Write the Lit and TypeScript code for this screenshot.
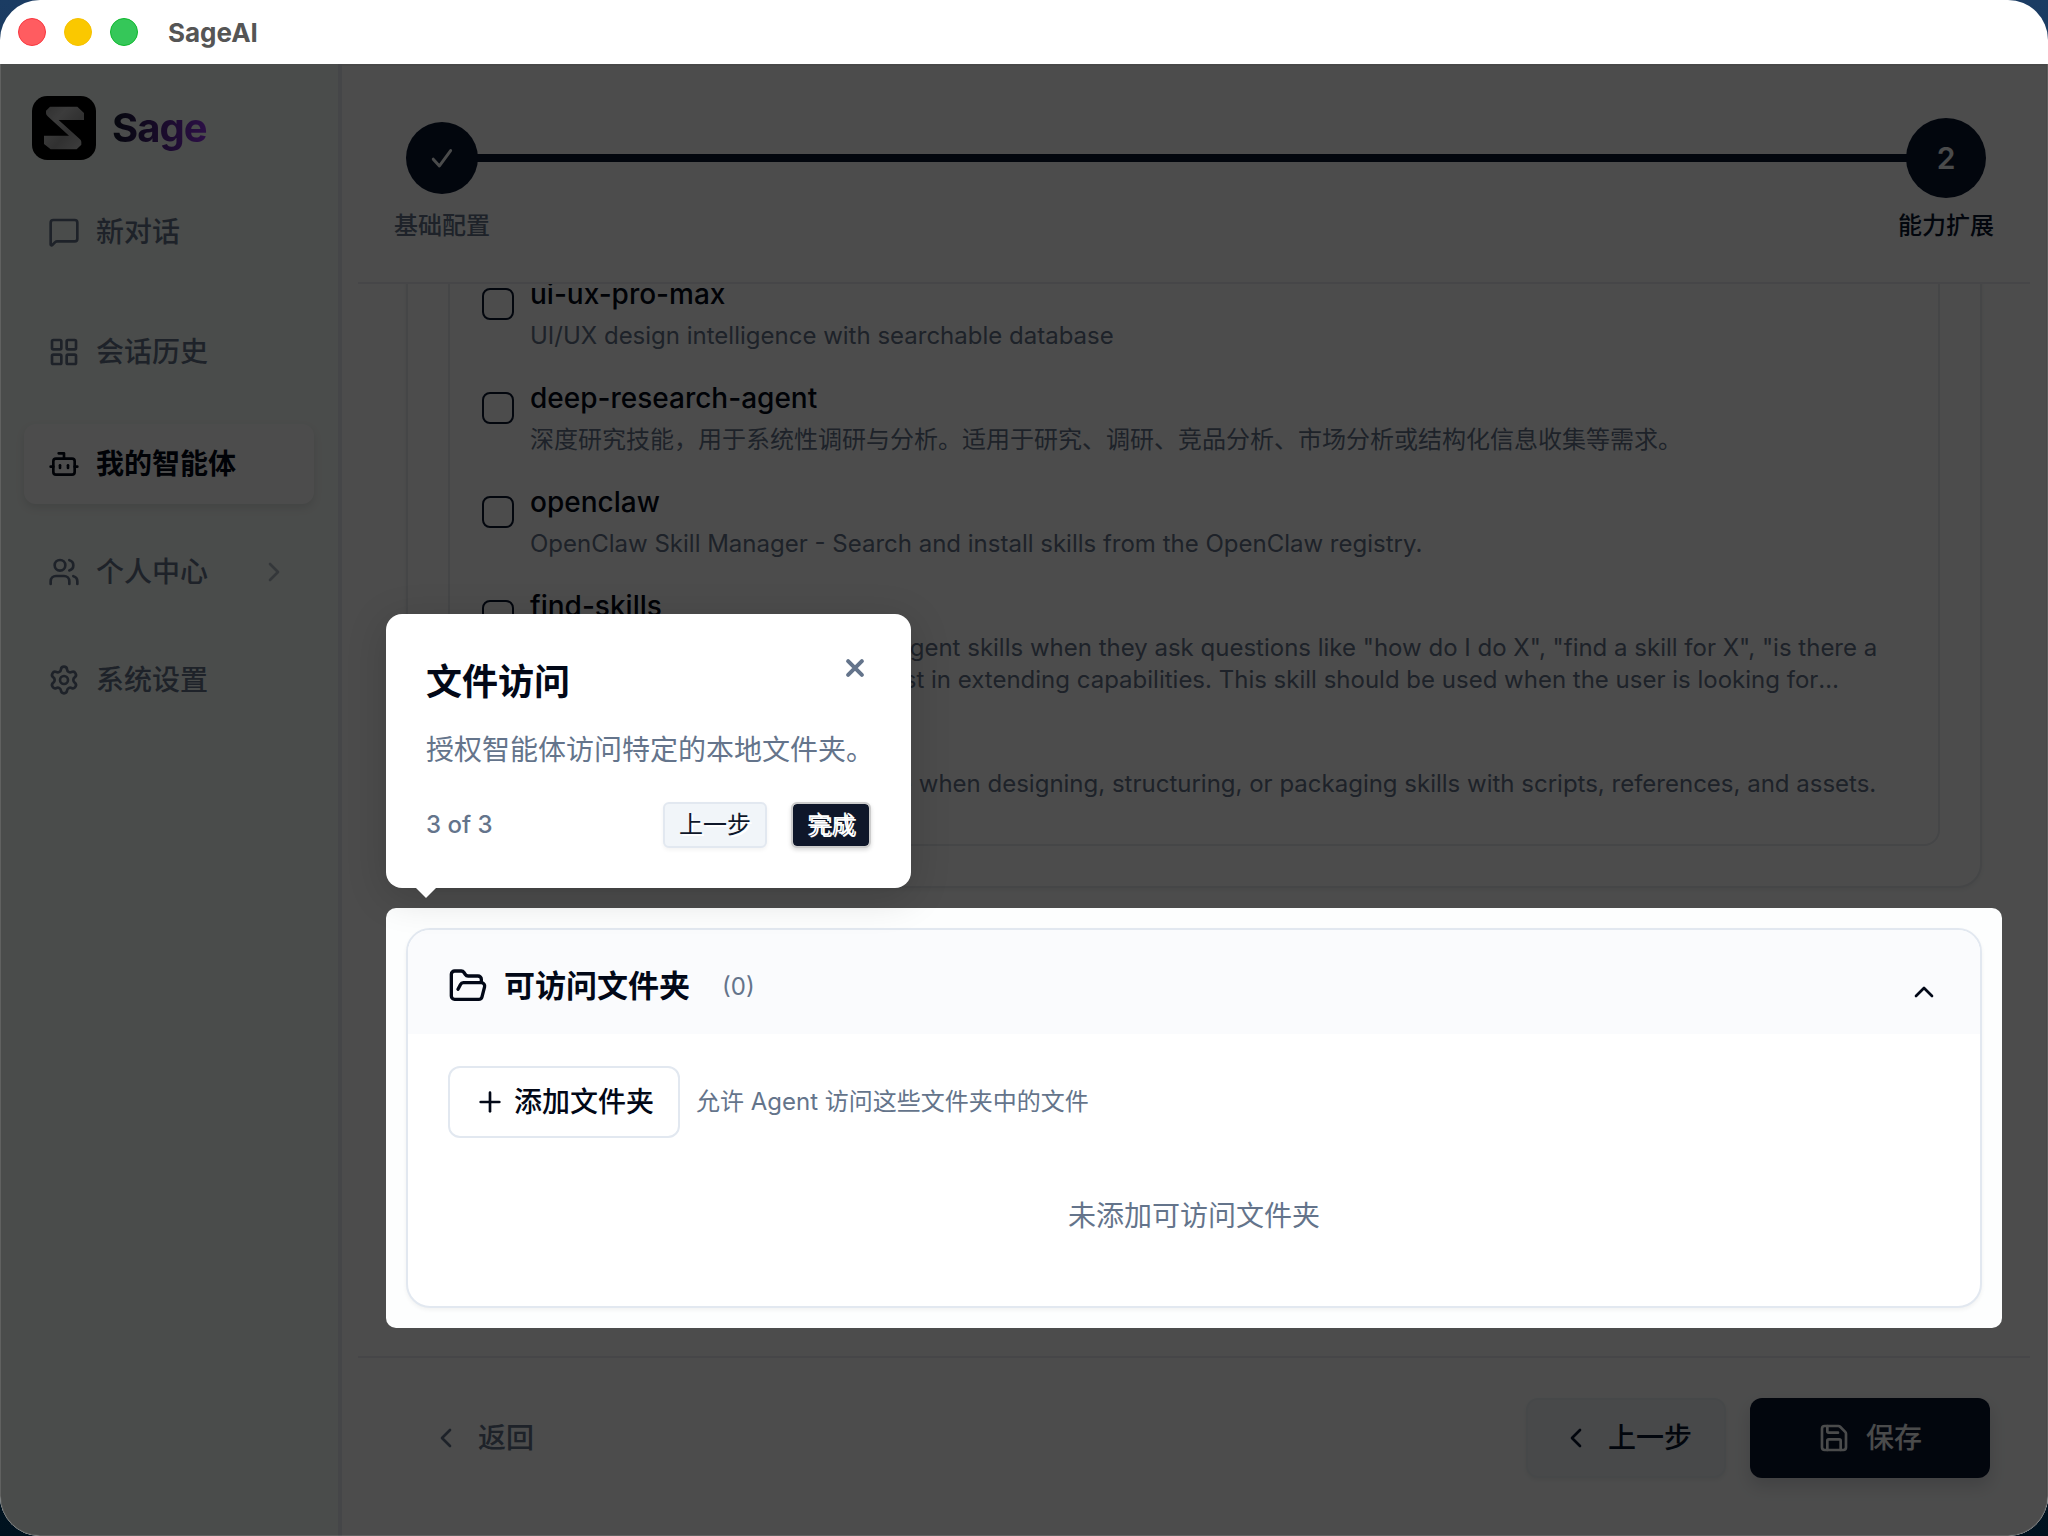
import { LitElement, html, css, svg } from "lit";
import { customElement, property } from "lit/decorators.js";

const ICONS: Record<string, unknown> = {
  message: svg`<path d="M22 17a2 2 0 0 1-2 2H6.828a2 2 0 0 0-1.414.586l-2.202 2.202A.71.71 0 0 1 2 21.286V5a2 2 0 0 1 2-2h16a2 2 0 0 1 2 2z"/>`,
  grid: svg`<rect width="7" height="7" x="3" y="3" rx="1"/><rect width="7" height="7" x="14" y="3" rx="1"/><rect width="7" height="7" x="14" y="14" rx="1"/><rect width="7" height="7" x="3" y="14" rx="1"/>`,
  bot: svg`<path d="M12 8V4H8"/><rect width="16" height="12" x="4" y="8" rx="2"/><path d="M2 14h2"/><path d="M20 14h2"/><path d="M15 13v2"/><path d="M9 13v2"/>`,
  users: svg`<path d="M16 21v-2a4 4 0 0 0-4-4H6a4 4 0 0 0-4 4v2"/><path d="M16 3.128a4 4 0 0 1 0 7.744"/><path d="M22 21v-2a4 4 0 0 0-3-3.87"/><circle cx="9" cy="7" r="4"/>`,
  settings: svg`<path d="M9.671 4.136a2.34 2.34 0 0 1 4.659 0 2.34 2.34 0 0 0 3.319 1.915 2.34 2.34 0 0 1 2.33 4.033 2.34 2.34 0 0 0 0 3.831 2.34 2.34 0 0 1-2.33 4.033 2.34 2.34 0 0 0-3.319 1.915 2.34 2.34 0 0 1-4.659 0 2.34 2.34 0 0 0-3.32-1.915 2.34 2.34 0 0 1-2.33-4.033 2.34 2.34 0 0 0 0-3.831A2.34 2.34 0 0 1 6.35 6.051a2.34 2.34 0 0 0 3.319-1.915"/><circle cx="12" cy="12" r="3"/>`,
  right: svg`<path d="m9 18 6-6-6-6"/>`,
  left: svg`<path d="m15 18-6-6 6-6"/>`,
  up: svg`<path d="m18 15-6-6-6 6"/>`,
  check: svg`<path stroke-width="2.5" d="M4.5 13 9.8 18.8 19.4 5.6"/>`,
  plus: svg`<path d="M5 12h14"/><path d="M12 5v14"/>`,
  folder: svg`<path d="m6 14 1.5-2.9A2 2 0 0 1 9.24 10H20a2 2 0 0 1 1.94 2.5l-1.54 6a2 2 0 0 1-1.95 1.5H4a2 2 0 0 1-2-2V5a2 2 0 0 1 2-2h3.9a2 2 0 0 1 1.69.9l.81 1.2a2 2 0 0 0 1.67.9H18a2 2 0 0 1 2 2v2"/>`,
  save: svg`<path d="M15.2 3a2 2 0 0 1 1.4.6l3.8 3.8a2 2 0 0 1 .6 1.4V19a2 2 0 0 1-2 2H5a2 2 0 0 1-2-2V5a2 2 0 0 1 2-2z"/><path d="M17 21v-7a1 1 0 0 0-1-1H8a1 1 0 0 0-1 1v7"/><path d="M7 3v4a1 1 0 0 0 1 1h7"/>`,
  close: svg`<path stroke-width="4.4" d="m4.5 4.5 15 15M19.500 4.500 4.500 19.500"/>`,
};

const icon = (name: string, size = 32) => html`<svg
  width=${size}
  height=${size}
  viewBox="0 0 24 24"
  fill="none"
  stroke="currentColor"
  stroke-width="2"
  stroke-linecap="round"
  stroke-linejoin="round"
  aria-hidden="true"
>${ICONS[name]}</svg>`;

const base = css`
  *, *::before, *::after { box-sizing: border-box; }
  button {
    font: inherit;
    color: inherit;
    border: 0;
    background: none;
    padding: 0;
    margin: 0;
    cursor: pointer;
  }
  svg { display: block; flex: none; }
  h1, h2, h3, p, ul { margin: 0; padding: 0; }
  ul { list-style: none; }
`;

@customElement("app-sidebar")
export class AppSidebar extends LitElement {
  static styles = [
    base,
    css`
      :host {
        display: block;
        flex: none;
        width: 342px;
        padding: 32px 24px;
        background: #f8fdfa;
        border-right: 4px solid #e6e9f2;
      }
      .brand {
        display: flex;
        align-items: center;
        gap: 16px;
        margin: 0 8px 32px;
      }
      .name {
        font-size: 40px;
        line-height: 64px;
        font-weight: 700;
        letter-spacing: -1px;
        color: transparent;
        background: linear-gradient(90deg, #0f172a, #9333ea);
        background-clip: text;
      }
      .nav { display: flex; flex-direction: column; gap: 28px; }
      .item {
        display: flex;
        align-items: center;
        gap: 16px;
        width: 100%;
        height: 80px;
        padding: 0 24px;
        border-radius: 12px;
        font-size: 28px;
        line-height: 40px;
        font-weight: 500;
        color: #64748b;
        text-align: left;
        text-decoration: none;
      }
      .primary { margin-bottom: 12px; }
      .history { margin-bottom: 4px; }
      .active {
        background: #fff;
        color: #020817;
        font-weight: 700;
        box-shadow: 0 4px 8px rgba(0, 0, 0, 0.1);
      }
      .label { flex: 1; }
      .more { opacity: 0.5; }
    `,
  ];

  render() {
    return html`
      <div class="brand">
        <svg width="64" height="64" viewBox="0 0 192 192" aria-hidden="true">
          <defs>
            <linearGradient id="steel" x1="0" y1="0" x2="1" y2="1">
              <stop offset="0" stop-color="#a0a0a0" />
              <stop offset="0.3" stop-color="#c8c8c8" />
              <stop offset="0.6" stop-color="#a4a4a4" />
              <stop offset="1" stop-color="#d0d0d0" />
            </linearGradient>
          </defs>
          <rect width="192" height="192" rx="46" fill="#000" />
          <path
            fill="url(#steel)"
            d="M54 32h82l20 19v21H80l64 58q4 3 4 8v8l-14 14H56l-20-16v-25h75L47 61q-5-4-5-9v-8z"
          />
        </svg>
        <span class="name">Sage</span>
      </div>
      <nav class="nav">
        <a class="item primary" href="#chat">${icon("message")}<span class="label">新对话</span></a>
        <a class="item history" href="#history">${icon("grid")}<span class="label">会话历史</span></a>
        <a class="item active" href="#agents" aria-current="page">${icon("bot")}<span class="label">我的智能体</span></a>
        <button class="item" type="button">
          ${icon("users")}<span class="label">个人中心</span><span class="more">${icon("right")}</span>
        </button>
        <a class="item" href="#settings">${icon("settings")}<span class="label">系统设置</span></a>
      </nav>
    `;
  }
}

@customElement("app-stepper")
export class AppStepper extends LitElement {
  static styles = [
    base,
    css`
      :host {
        display: flex;
        align-items: flex-start;
        padding: 56px 36px 40px;
        border-bottom: 2px solid #e9ebf0;
      }
      .step {
        display: flex;
        flex-direction: column;
        align-items: center;
        gap: 16px;
        font-size: 24px;
        line-height: 32px;
        font-weight: 500;
        color: #64748b;
      }
      .dot {
        position: relative;
        z-index: 1;
        display: grid;
        place-items: center;
        width: 72px;
        height: 72px;
        border-radius: 50%;
        background: #08142e;
        color: #f8fafc;
      }
      .current { color: #08142e; }
      .current .dot {
        width: 80px;
        height: 80px;
        margin: -4px 0;
        font-size: 30px;
        font-weight: 600;
      }
      .line {
        flex: 1;
        height: 8px;
        margin: 32px -40px 0;
        background: #08142e;
      }
    `,
  ];

  render() {
    return html`
      <div class="step"><span class="dot">${icon("check", 28)}</span>基础配置</div>
      <div class="line"></div>
      <div class="step current"><span class="dot">2</span>能力扩展</div>
    `;
  }
}

interface Skill {
  name: string;
  desc: string;
}

const SKILLS: Skill[] = [
  { name: "ui-ux-pro-max", desc: "UI/UX design intelligence with searchable database" },
  { name: "deep-research-agent", desc: "深度研究技能，用于系统性调研与分析。适用于研究、调研、竞品分析、市场分析或结构化信息收集等需求。" },
  { name: "openclaw", desc: "OpenClaw Skill Manager - Search and install skills from the OpenClaw registry." },
  {
    name: "find-skills",
    desc: 'Helps users discover and install agent skills when they ask questions like "how do I do X", "find a skill for X", "is there a skill that can...", or express interest in extending capabilities. This skill should be used when the user is looking for functionality that might exist as an installable skill.',
  },
  {
    name: "skill-creator",
    desc: "Create or update AgentSkills. Use when designing, structuring, or packaging skills with scripts, references, and assets.",
  },
];

@customElement("skill-list")
export class SkillList extends LitElement {
  @property({ attribute: false }) skills: Skill[] = [];

  static styles = [
    base,
    css`
      :host {
        display: flex;
        flex-direction: column;
        justify-content: flex-end;
        flex: 1;
        min-height: 0;
        overflow: hidden;
        padding: 0 48px 8px;
      }
      .card {
        flex: none;
        padding: 40px;
        border: 2px solid #e6e9ee;
        border-radius: 24px;
        background: #fff;
        box-shadow: 0 2px 4px rgba(0, 0, 0, 0.05);
      }
      .list {
        display: flex;
        flex-direction: column;
        gap: 28px;
        padding: 32px 32px 44px;
        border: 2px solid #e6e9ee;
        border-radius: 16px;
      }
      .row { display: flex; align-items: flex-start; gap: 16px; }
      .box {
        appearance: none;
        flex: none;
        width: 32px;
        height: 32px;
        margin: 12px 0 0;
        border: 2px solid #08142e;
        border-radius: 8px;
      }
      .text { flex: 1; min-width: 0; display: flex; flex-direction: column; gap: 8px; }
      .name { font-size: 28px; line-height: 36px; font-weight: 500; color: #020817; }
      .desc {
        font-size: 24px;
        line-height: 32px;
        color: #64748b;
        display: -webkit-box;
        -webkit-box-orient: vertical;
        -webkit-line-clamp: 2;
        overflow: hidden;
      }
    `,
  ];

  render() {
    return html`<div class="card">
      <ul class="list">
        ${this.skills.map(
          (s, i) => html`<li class="row">
            <input class="box" type="checkbox" id="skill-${i}" />
            <div class="text">
              <label class="name" for="skill-${i}">${s.name}</label>
              <p class="desc">${s.desc}</p>
            </div>
          </li>`
        )}
      </ul>
    </div>`;
  }
}

@customElement("tour-popover")
export class TourPopover extends LitElement {
  static styles = [
    base,
    css`
      :host {
        position: absolute;
        left: 0;
        bottom: calc(100% + 20px);
        width: 525px;
        padding: 40px;
        border-radius: 16px;
        background: #fff;
        color: #020817;
        box-shadow: 0 8px 40px rgba(0, 0, 0, 0.16);
      }
      .arrow {
        position: absolute;
        left: 30px;
        top: 100%;
        border: 10px solid transparent;
        border-top-color: #fff;
        border-bottom-width: 0;
      }
      .head { display: flex; justify-content: space-between; align-items: flex-start; }
      .title { font-size: 36px; line-height: 56px; font-weight: 600; }
      .close { padding: 3px; margin-right: 2px; color: #64748b; }
      .desc {
        margin-top: 18px;
        font-size: 28px;
        line-height: 44px;
        color: #64748b;
        white-space: nowrap;
      }
      .foot { display: flex; align-items: center; gap: 24px; margin-top: 30px; }
      .progress { flex: 1; font-size: 24px; line-height: 40px; font-weight: 500; color: #64748b; }
      .btn {
        height: 46px;
        padding: 0 14px;
        border: 2px solid #e2e8f0;
        border-radius: 6px;
        background: #f1f5f9;
        color: #0f172a;
        font-size: 24px;
        line-height: 40px;
        text-shadow: 2px 2px 0 #fff;
        box-shadow: 0 2px 4px rgba(0, 0, 0, 0.05);
      }
      .done {
        border-color: #ccc;
        background: #0f172a;
        background-clip: padding-box;
        color: #fff;
        box-shadow: 0 2px 4px rgba(0, 0, 0, 0.15);
      }
    `,
  ];

  render() {
    return html`
      <div class="head">
        <h2 class="title">文件访问</h2>
        <button class="close" type="button" aria-label="关闭">${icon("close", 22)}</button>
      </div>
      <p class="desc">授权智能体访问特定的本地文件夹。</p>
      <div class="foot">
        <span class="progress">3 of 3</span>
        <button class="btn" type="button">上一步</button>
        <button class="btn done" type="button">完成</button>
      </div>
      <span class="arrow"></span>
    `;
  }
}

@customElement("folder-card")
export class FolderCard extends LitElement {
  static styles = [
    base,
    css`
      :host {
        display: block;
        border: 2px solid #e2e8f0;
        border-radius: 24px;
        background: #fff;
        overflow: hidden;
        color: #020817;
        box-shadow: 0 2px 4px rgba(0, 0, 0, 0.05);
      }
      .head {
        display: flex;
        align-items: center;
        height: 104px;
        padding: 8px 40px 0;
        background: #fafbfd;
      }
      .title { margin-left: 16px; font-size: 31px; line-height: 48px; font-weight: 600; }
      .count { margin-left: 32px; font-size: 24px; color: #64748b; }
      .toggle { margin-left: auto; margin-top: 12px; }
      .body { padding: 32px 40px 40px; }
      .actions { display: flex; align-items: center; gap: 16px; }
      .add {
        display: flex;
        align-items: center;
        gap: 8px;
        height: 72px;
        padding: 0 24px;
        border: 2px solid #e2e8f0;
        border-radius: 12px;
        background: #fff;
        font-size: 28px;
        line-height: 40px;
        font-weight: 500;
      }
      .hint { font-size: 24px; line-height: 32px; color: #64748b; }
      .empty {
        margin-top: 24px;
        padding: 34px 0 30px;
        text-align: center;
        font-size: 28px;
        line-height: 40px;
        color: #64748b;
      }
    `,
  ];

  render() {
    return html`
      <div class="head">
        ${icon("folder", 40)}
        <h3 class="title">可访问文件夹</h3>
        <span class="count">(0)</span>
        <button class="toggle" type="button" aria-label="收起">${icon("up")}</button>
      </div>
      <div class="body">
        <div class="actions">
          <button class="add" type="button">${icon("plus")}添加文件夹</button>
          <span class="hint">允许 Agent 访问这些文件夹中的文件</span>
        </div>
        <p class="empty">未添加可访问文件夹</p>
      </div>
    `;
  }
}

@customElement("app-root")
export class AppRoot extends LitElement {
  static styles = [
    base,
    css`
      :host {
        display: block;
        height: 100vh;
        background: linear-gradient(#1b3c63, #00121f);
        font-family: Inter, "Noto Sans CJK SC", sans-serif;
      }
      .window {
        position: relative;
        display: flex;
        flex-direction: column;
        height: 100%;
        border-radius: 40px;
        overflow: hidden;
        background: #fff;
      }
      .window::after {
        content: "";
        position: absolute;
        inset: 0;
        z-index: 20;
        border: 1px solid rgba(255, 255, 255, 0.12);
        border-radius: inherit;
        pointer-events: none;
      }
      .titlebar {
        display: flex;
        align-items: center;
        gap: 18px;
        flex: none;
        height: 64px;
        padding: 0 18px;
      }
      .light { width: 28px; height: 28px; border-radius: 50%; border: 1px solid; }
      .red { background: #ff5c60; border-color: #f8373f; }
      .yellow { background: #fac800; border-color: #f5c000; }
      .green { background: #35c759; border-color: #0fb82e; }
      .title { margin-left: 12px; font-size: 26px; font-weight: 700; color: #555; }
      .content { position: relative; flex: 1; min-height: 0; display: flex; overflow: hidden; }
      .main {
        flex: 1;
        min-width: 0;
        display: flex;
        flex-direction: column;
        padding: 0 16px;
        background: #fdfefe;
        border: 2px solid #f0f0f2;
        border-width: 2px 2px 0 0;
      }
      .spotlight {
        position: relative;
        z-index: 10;
        flex: none;
        margin: 12px 28px 28px;
        padding: 20px;
        border-radius: 10px;
        box-shadow: 0 0 0 9999px rgba(0, 0, 0, 0.7);
      }
      .footer {
        display: flex;
        align-items: center;
        gap: 24px;
        flex: none;
        padding: 40px 40px 58px;
        border-top: 2px solid #e9ebf0;
        font-size: 28px;
        line-height: 40px;
        font-weight: 500;
      }
      .btn {
        display: flex;
        align-items: center;
        justify-content: center;
        gap: 16px;
        height: 80px;
        padding: 0 32px;
        border-radius: 12px;
      }
      .back { margin-right: auto; color: #64748b; }
      .prev {
        background: #f1f5f9;
        border: 2px solid #ecf0f5;
        color: #08142e;
        box-shadow: 0 2px 4px rgba(0, 0, 0, 0.05);
      }
      .save {
        min-width: 240px;
        background: #08142e;
        color: #f8fafc;
        box-shadow: 0 8px 16px rgba(15, 23, 42, 0.15);
      }
    `,
  ];

  render() {
    return html`
      <div class="window">
        <header class="titlebar">
          <span class="light red"></span>
          <span class="light yellow"></span>
          <span class="light green"></span>
          <span class="title">SageAI</span>
        </header>
        <div class="content">
          <app-sidebar></app-sidebar>
          <main class="main">
            <app-stepper></app-stepper>
            <skill-list .skills=${SKILLS}></skill-list>
            <section class="spotlight">
              <folder-card></folder-card>
              <tour-popover></tour-popover>
            </section>
            <footer class="footer">
              <button class="btn back" type="button">${icon("left")}返回</button>
              <button class="btn prev" type="button">${icon("left")}上一步</button>
              <button class="btn save" type="button">${icon("save")}保存</button>
            </footer>
          </main>
        </div>
      </div>
    `;
  }
}
